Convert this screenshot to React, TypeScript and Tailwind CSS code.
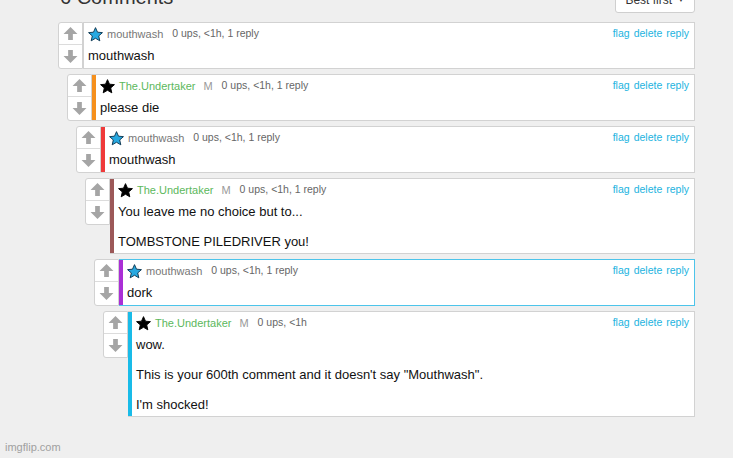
import React from "react";

type Comment = {
  user: "mouthwash" | "undertaker";
  meta: string;
  body: string;
  indent: string;
  bar?: string;
  highlight?: boolean;
};

const comments: Comment[] = [
  { user: "mouthwash", meta: "0 ups, <1h, 1 reply", body: "mouthwash", indent: "ml-0" },
  {
    user: "undertaker",
    meta: "0 ups, <1h, 1 reply",
    body: "please die",
    indent: "ml-[9px]",
    bar: "bg-[#f5901e]",
  },
  {
    user: "mouthwash",
    meta: "0 ups, <1h, 1 reply",
    body: "mouthwash",
    indent: "ml-[18px]",
    bar: "bg-[#ef3a3a]",
  },
  {
    user: "undertaker",
    meta: "0 ups, <1h, 1 reply",
    body: "You leave me no choice but to...\n\nTOMBSTONE PILEDRIVER you!",
    indent: "ml-[27px]",
    bar: "bg-[#9c5858]",
  },
  {
    user: "mouthwash",
    meta: "0 ups, <1h, 1 reply",
    body: "dork",
    indent: "ml-[36px]",
    bar: "bg-[#aa2fd6]",
    highlight: true,
  },
  {
    user: "undertaker",
    meta: "0 ups, <1h",
    body: 'wow.\n\nThis is your 600th comment and it doesn\'t say "Mouthwash".\n\nI\'m shocked!',
    indent: "ml-[45px]",
    bar: "bg-[#19bbe8]",
  },
];

function Star({ blue }: { blue: boolean }) {
  return (
    <svg width="15" height="15" viewBox="0 0 24 24" className="shrink-0">
      <path
        d="M12 1l3.2 7.3 7.9.7-6 5.3 1.8 7.8L12 18l-6.9 4.1 1.8-7.8-6-5.3 7.9-.7z"
        fill={blue ? "#27a9e1" : "#000000"}
        stroke={blue ? "#0b3550" : "#000000"}
        strokeWidth={1.5}
        strokeLinejoin="round"
      />
    </svg>
  );
}

function Arrow({ down = false }: { down?: boolean }) {
  return (
    <svg
      width="15"
      height="15"
      viewBox="0 0 14 14"
      className={down ? "rotate-180" : ""}
    >
      <path d="M7 1 L13.5 7.5 H9.2 V13 H4.8 V7.5 H0.5 Z" fill="#a5a5a5" />
    </svg>
  );
}

function CommentRow({ c }: { c: Comment }) {
  const blue = c.user === "mouthwash";
  return (
    <div className={`flex items-start ${c.indent}`}>
      <div className="flex w-[25px] shrink-0 flex-col rounded-l-[3px] border border-[#d2d2d2] bg-white">
        <div className="flex h-[22px] items-center justify-center border-b border-[#dcdcdc]">
          <Arrow />
        </div>
        <div className="flex h-[23px] items-center justify-center">
          <Arrow down />
        </div>
      </div>
      <div
        className={`flex min-h-[47px] flex-1 border bg-white ${
          c.highlight ? "border-[#4cc4ea]" : "border-[#d2d2d2]"
        } ${c.bar ? "border-l-0" : ""}`}
      >
        {c.bar && <div className={`w-[4px] shrink-0 ${c.bar}`} />}
        <div className="flex-1 pl-[4px] pr-[5px]">
          <div className="flex h-[20px] items-center pt-[2px]">
            <Star blue={blue} />
            {blue ? (
              <span className="ml-[4px] text-[11px] text-[#777777]">mouthwash</span>
            ) : (
              <>
                <span className="ml-[4px] text-[11px] text-[#5cb85c]">The.Undertaker</span>
                <span className="ml-[8px] text-[11px] text-[#999999]">M</span>
              </>
            )}
            <span className="ml-[9px] text-[10.5px] text-[#666666]">{c.meta}</span>
            <div className="ml-auto flex gap-[4px] text-[10.5px] text-[#22b3e0]">
              <span>flag</span>
              <span>delete</span>
              <span>reply</span>
            </div>
          </div>
          <div className="whitespace-pre-wrap pb-[4px] pt-[5px] text-[13px] leading-[15px] text-[#111111]">
            {c.body}
          </div>
        </div>
      </div>
    </div>
  );
}

export default function App() {
  return (
    <div
      className="relative h-[458px] w-[733px] overflow-hidden bg-[#efefef]"
      style={{ fontFamily: '"Liberation Sans", Arial, sans-serif' }}
    >
      <div className="ml-[58px] w-[637px]">
        <div className="-mt-[13px] mb-[9px] flex h-[26px] items-start justify-between">
          <div className="pl-[2px] text-[20px] leading-[20px] text-[#333333]">6 Comments</div>
          <div className="flex h-[26px] items-center gap-[5px] rounded-[3px] border border-[#cfcfcf] bg-white px-[9px] text-[12px] text-[#333333]">
            <span>Best first</span>
            <span className="text-[8px]">▼</span>
          </div>
        </div>
        <div className="flex flex-col gap-[5px]">
          {comments.map((c, i) => (
            <CommentRow key={i} c={c} />
          ))}
        </div>
      </div>
      <div className="absolute bottom-[3px] left-[5px] text-[11px] text-[#a0a0a0]">imgflip.com</div>
    </div>
  );
}
